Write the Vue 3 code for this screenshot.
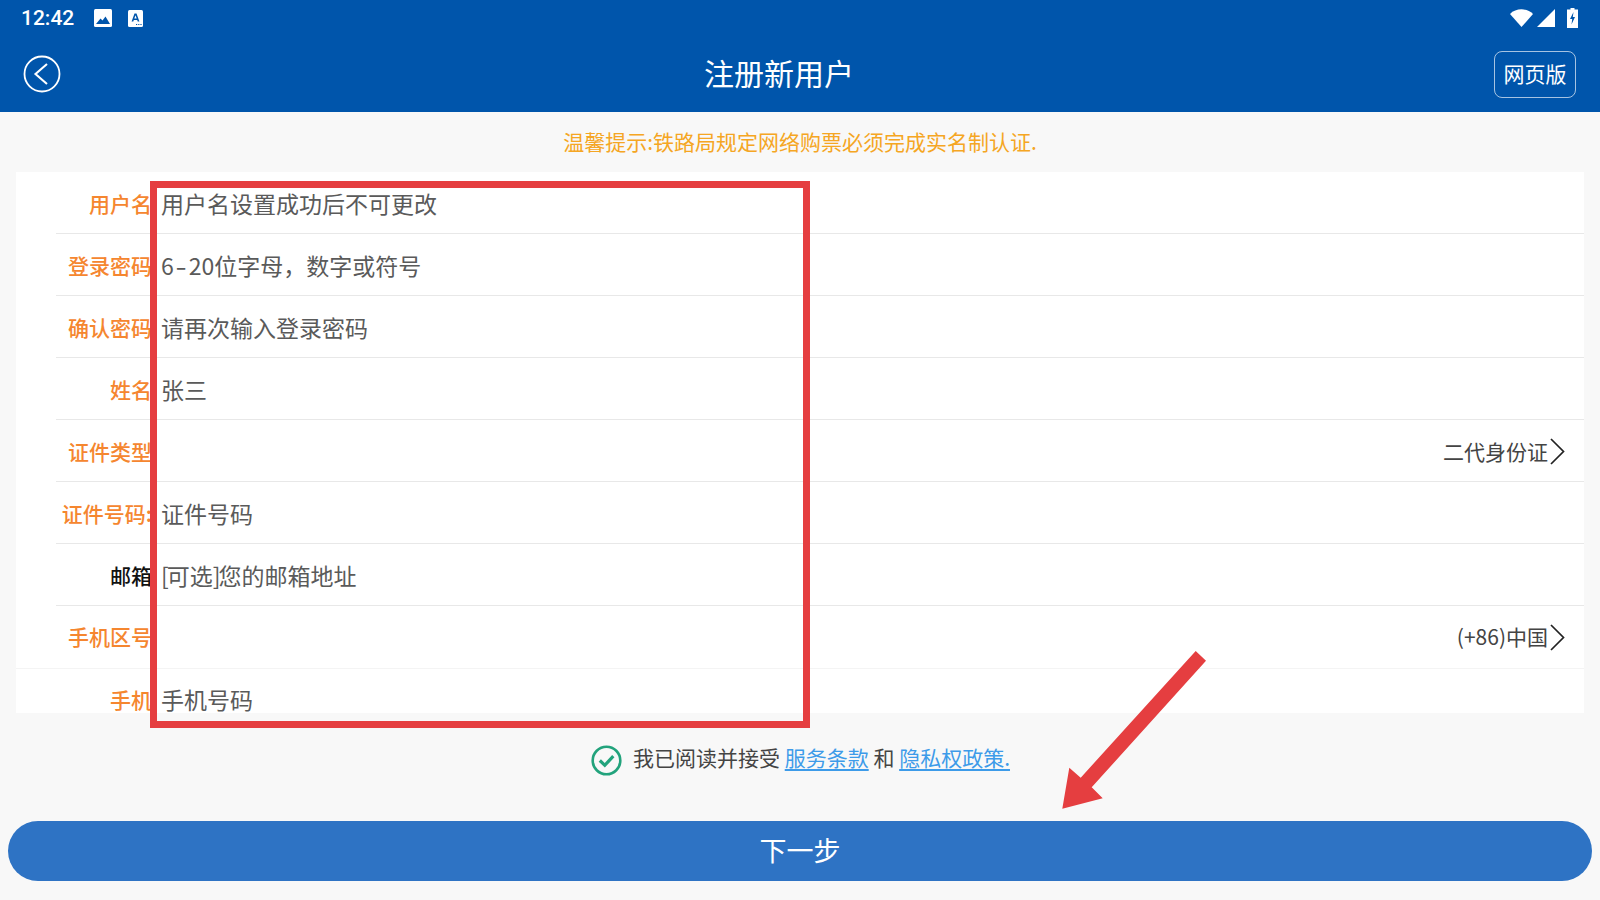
<script setup>
const rows = [
  { label: '用户名', value: '用户名设置成功后不可更改' },
  { label: '登录密码', value: '位字母，数字或符号', range: true },
  { label: '确认密码', value: '请再次输入登录密码' },
  { label: '姓名', value: '张三' },
  { label: '证件类型', value: '', right: '二代身份证' },
  { label: '证件号码:', value: '证件号码' },
  { label: '邮箱', value: '您的邮箱地址', optional: true, dark: true },
  { label: '手机区号', value: '', right: '(+86)中国', full: true },
  { label: '手机', value: '手机号码', last: true }
]
</script>

<template>
  <div class="page">
    <header class="head">
      <div class="status">
        <span class="time">12:42</span>
        <svg class="st-img" width="18" height="18" viewBox="0 0 18 18">
          <rect width="18" height="18" rx="1.5" fill="#fff" />
          <path d="M2 15 L6.5 9.5 L8.5 11.5 L11.5 7.5 L16 15 Z" fill="#0055ab" />
        </svg>
        <svg class="st-a" width="15" height="17" viewBox="0 0 15 17">
          <rect width="15" height="17" rx="1.5" fill="#fff" />
          <path d="M3.6 11.5 L6.5 3.5 H8.5 L11.4 11.5 H9.7 L9.2 10 H5.8 L5.3 11.5 Z M6.3 8.6 H8.7 L7.5 5.2 Z" fill="#0055ab" />
          <path d="M8 14.5 H9.2 M10.2 14.5 H11.4 M12.4 14.5 H13.6" stroke="#0055ab" stroke-width="1.2" />
        </svg>
        <span class="st-gap"></span>
        <svg width="23" height="18" viewBox="0 0 23 18">
          <path d="M0 5 C6 -1.2 17 -1.2 23 5 L11.5 18 Z" fill="#fff" />
        </svg>
        <svg class="st-sig" width="18" height="18" viewBox="0 0 18 18">
          <path d="M18 0 V18 H0 Z" fill="#fff" />
        </svg>
        <svg class="st-bat" width="11" height="20" viewBox="0 0 11 20">
          <path d="M3.5 0 H7.5 V1.5 H11 V20 H0 V1.5 H3.5 Z" fill="#fff" />
          <path d="M6.5 4 L3 11 H5.2 L4.5 16.5 L8 9 H5.8 Z" fill="#0055ab" />
        </svg>
      </div>
      <div class="bar">
        <svg class="back" width="38" height="38" viewBox="0 0 38 38" fill="none" stroke="#fff">
          <circle cx="19" cy="19" r="17.5" stroke-width="1.8" />
          <path d="M24 9 L12.5 19 L24 29" stroke-width="2.1" />
        </svg>
        <h1 class="title">注册新用户</h1>
        <button class="web">网页版</button>
      </div>
    </header>

    <p class="tip">温馨提示:铁路局规定网络购票必须完成实名制认证.</p>

    <section class="card">
      <div v-for="r in rows" :key="r.label" class="row" :class="{ full: r.full, last: r.last }">
        <span class="label" :class="{ dark: r.dark }">{{ r.label }}</span>
        <span class="value"><template v-if="r.range">6<span class="dash">-</span>20</template><template v-if="r.optional"><span class="br">[</span>可选<span class="br">]</span></template>{{ r.value }}</span>
        <span v-if="r.right" class="right">
          {{ r.right }}
          <svg width="15" height="27" viewBox="0 0 15 27" fill="none" stroke="#222" stroke-width="1.7">
            <path d="M1 1 L13.5 13.5 L1 26" />
          </svg>
        </span>
      </div>
    </section>

    <div class="agree">
      <svg width="31" height="31" viewBox="0 0 31 31" fill="none" stroke="#22a37c">
        <circle cx="15.5" cy="15.5" r="13.8" stroke-width="2.6" />
        <path d="M8.8 15.5 L13.8 20.3 L22.3 11.2" stroke-width="3.2" />
      </svg>
      <span class="agree-text">我已阅读并接受 <a class="link">服务条款</a> 和 <a class="link">隐私权政策.</a></span>
    </div>

    <button class="next">下一步</button>

    <div class="mark"></div>
    <svg class="arrow" width="1600" height="900" viewBox="0 0 1600 900">
      <path d="M1195.7 651 L1206 660.7 L1091.7 787.3 L1102.7 798.3 L1062.3 808.7 L1069.3 767.7 L1080.7 777.7 Z" fill="#e53e40" />
    </svg>
  </div>
</template>

<style>
body { margin: 0; background: #f8f8f8; }
</style>

<style scoped>
.page {
  position: relative;
  width: 1600px;
  height: 900px;
  overflow: hidden;
  display: flex;
  flex-direction: column;
  background: #f8f8f8;
  font-family: "Noto Sans CJK SC", "Noto Sans", sans-serif;
}
.head { height: 112px; background: #0055ab; color: #fff; flex: none; }
.status {
  height: 36px;
  display: flex;
  align-items: center;
  padding: 0 22px 0 21px;
}
.time { font: 500 21px Roboto, sans-serif; width: 73px; }
.st-a { margin-left: 16px; }
.st-gap { flex: 1; }
.st-sig { margin-left: 4px; }
.st-bat { margin-left: 12px; }
.bar {
  height: 76px;
  display: flex;
  align-items: center;
  padding: 0 24px 0 23px;
}
.back { flex: none; }
.title {
  flex: 1;
  margin: 0 0 5px 3px;
  text-align: center;
  font-size: 30px;
  font-weight: 400;
  line-height: 40px;
}
.web {
  width: 82px;
  height: 47px;
  flex: none;
  padding: 0 0 2px;
  background: transparent;
  color: #fff;
  border: 1px solid rgba(255, 255, 255, 0.65);
  border-radius: 8px;
  font-family: inherit;
  font-size: 21px;
}
.tip {
  height: 58px;
  margin: 0;
  padding-bottom: 2px;
  flex: none;
  text-align: center;
  line-height: 58px;
  font-size: 21px;
  color: #f5a623;
}
.card {
  height: 541px;
  margin: 0 16px;
  flex: none;
  background: #fff;
}
.row {
  position: relative;
  display: flex;
  align-items: center;
  height: 62px;
  box-sizing: border-box;
  flex: none;
  margin-left: 40px;
  border-bottom: 1px solid #e8e8e8;
}
.row.full { height: 63px; margin-left: 0; padding: 0 0 2px 40px; border-bottom-color: #f4f4f4; }
.row.last { height: 44px; padding: 18px 0 0 0; align-items: flex-start; border-bottom: 0; }
.label {
  width: 96px;
  flex: none;
  white-space: nowrap;
  text-align: right;
  font-size: 21px;
  font-weight: 500;
  line-height: 24px;
  color: #f5862f;
}
.label.dark { color: #111; }
.value {
  flex: 1;
  margin-left: 9px;
  font-size: 23px;
  line-height: 24px;
  color: #5a5a5a;
}
.dash { display: inline-block; margin: 0 3.5px; transform: scaleX(1.4); }
.br { letter-spacing: -2px; }
.right {
  display: flex;
  align-items: center;
  gap: 2px;
  padding-right: 19px;
  font-size: 21px;
  color: #444;
}
.right svg { position: relative; top: 1px; }
.agree {
  height: 94px;
  flex: none;
  display: flex;
  align-items: center;
  justify-content: center;
  gap: 11px;
  padding-left: 1px;
}
.agree-text { margin-bottom: 7px; font-size: 21px; color: #444; }
.link { color: #3d9be9; text-decoration: underline; text-underline-offset: 3px; }
.next {
  flex: none;
  height: 60px;
  margin: 14px 8px 0;
  padding: 0 0 4px;
  border: 0;
  border-radius: 30px;
  background: #2e73c4;
  color: #fff;
  font-family: inherit;
  font-size: 27px;
}
.mark {
  position: absolute;
  left: 150px;
  top: 181px;
  width: 660px;
  height: 547px;
  box-sizing: border-box;
  border: 7px solid #e53e40;
}
.arrow { position: absolute; left: 0; top: 0; pointer-events: none; }
</style>
